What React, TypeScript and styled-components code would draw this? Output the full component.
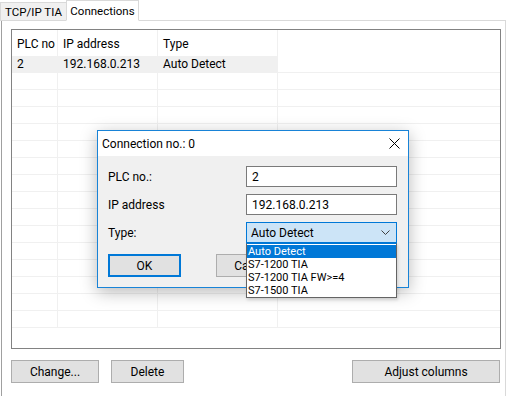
import React from "react";
import styled, { createGlobalStyle } from "styled-components";

const Global = createGlobalStyle`
  html, body { margin: 0; padding: 0; background: #ffffff; }
  body { font-family: Roboto, "Noto Sans", sans-serif; font-size: 12px; color: #000; }
  * { box-sizing: border-box; }
`;

const Window = styled.div`
  position: relative;
  width: 509px;
  height: 396px;
  overflow: hidden;
  background: #ffffff;
`;

const TabStrip = styled.div`
  display: flex;
  align-items: flex-end;
  height: 21px;
  margin-bottom: -1px;
  position: relative;
  z-index: 1;
`;

const Tab = styled.div<{ $active?: boolean }>`
  display: flex;
  align-items: center;
  justify-content: center;
  font-size: 11.5px;
  height: ${(p) => (p.$active ? "21px" : "19px")};
  width: ${(p) => (p.$active ? "73px" : "67px")};
  background: ${(p) => (p.$active ? "#ffffff" : "#f0f0f0")};
  border: 1px solid #d9d9d9;
  border-bottom: ${(p) => (p.$active ? "1px solid #ffffff" : "1px solid #d9d9d9")};
  margin-left: ${(p) => (p.$active ? "-1px" : "0")};
  white-space: nowrap;
  padding-top: ${(p) => (p.$active ? "0" : "1px")};
`;

const Pane = styled.div`
  margin-left: 1px;
  width: 505px;
  height: 376px;
  border: 1px solid #d9d9d9;
  border-left-color: #a0a0a0;
  border-bottom: none;
  padding: 8px 0 0 9px;
  display: flex;
  flex-direction: column;
`;

const ListView = styled.div`
  width: 490px;
  height: 320px;
  border: 1px solid #828282;
  background: #fff;
  display: flex;
  flex-direction: column;
`;

const GridRow = styled.div<{ $header?: boolean }>`
  display: grid;
  grid-template-columns: 46px 100px 120px 1fr;
  height: ${(p) => (p.$header ? "26px" : "17px")};
  border-bottom: ${(p) => (p.$header ? "none" : "1px solid #f0f0f0")};
`;

const Cell = styled.div<{ $selected?: boolean; $last?: boolean; $header?: boolean }>`
  display: flex;
  align-items: center;
  padding-left: 5px;
  padding-top: ${(p) => (p.$header ? "1px" : "0")};
  border-right: ${(p) => (p.$last ? "none" : "1px solid #f0f0f0")};
  background: ${(p) => (p.$selected ? "#f0f0f0" : "transparent")};
  white-space: nowrap;
  overflow: hidden;
`;

const ButtonBar = styled.div`
  display: flex;
  margin-top: 11px;
  gap: 12px;
  width: 489px;
`;

const Button = styled.div<{ $w: number; $push?: boolean; $default?: boolean }>`
  width: ${(p) => p.$w}px;
  height: 23px;
  display: flex;
  align-items: center;
  justify-content: center;
  background: #e1e1e1;
  border: ${(p) => (p.$default ? "2px solid #0078d7" : "1px solid #adadad")};
  margin-left: ${(p) => (p.$push ? "auto" : "0")};
  white-space: nowrap;
`;

const Dialog = styled.div`
  position: absolute;
  left: 97px;
  top: 130px;
  width: 312px;
  height: 158px;
  border: 1px solid #1883d7;
  background: #f0f0f0;
  box-shadow: 0 4px 16px rgba(0, 0, 0, 0.28);
  display: flex;
  flex-direction: column;
  z-index: 5;
`;

const TitleBar = styled.div`
  height: 25px;
  background: #ffffff;
  display: flex;
  align-items: center;
  padding-left: 4px;
  padding-right: 8px;
  justify-content: space-between;
`;

const Body = styled.div`
  position: relative;
  flex: 1;
  padding: 10px 11px 0 10px;
  display: flex;
  flex-direction: column;
  gap: 7px;
`;

const FieldRow = styled.div`
  display: flex;
  align-items: center;
  justify-content: space-between;
  height: 21px;
`;

const Input = styled.div`
  width: 151px;
  height: 21px;
  background: #fff;
  border: 1px solid #7a7a7a;
  display: flex;
  align-items: center;
  padding-left: 5px;
`;

const Combo = styled(Input)`
  background: #cce4f7;
  border-color: #0078d7;
  justify-content: space-between;
  padding-left: 4px;
  padding-right: 6px;
`;

const DialogButtons = styled.div`
  display: flex;
  gap: 35px;
  margin-top: 4px;
`;

const DropList = styled.div`
  position: absolute;
  left: 148px;
  top: 87px;
  width: 151px;
  background: #fff;
  border: 1px solid #646464;
  border-top-color: #0078d7;
  display: flex;
  flex-direction: column;
  padding-top: 1px;
  box-shadow: 1px 2px 3px rgba(0, 0, 0, 0.15);
`;

const DropItem = styled.div<{ $hl?: boolean }>`
  height: 13px;
  line-height: 13px;
  font-size: 11px;
  padding-left: 1px;
  background: ${(p) => (p.$hl ? "#0078d7" : "transparent")};
  color: ${(p) => (p.$hl ? "#fff" : "#000")};
  white-space: nowrap;
  overflow: hidden;
`;

const Chevron = () => (
  <svg width="9" height="5" viewBox="0 0 9 5">
    <path d="M0.5 0.5 L4.5 4.5 L8.5 0.5" fill="none" stroke="#404040" strokeWidth="1" />
  </svg>
);

const CloseIcon = () => (
  <svg width="11" height="11" viewBox="0 0 11 11">
    <path d="M0.5 0.5 L10.5 10.5 M10.5 0.5 L0.5 10.5" stroke="#000" strokeWidth="1" />
  </svg>
);

const rows = Array.from({ length: 15 });

export default function App() {
  return (
    <Window>
      <Global />
      <TabStrip>
        <Tab>TCP/IP TIA</Tab>
        <Tab $active>Connections</Tab>
      </TabStrip>
      <Pane>
        <ListView>
          <GridRow $header>
            <Cell $header>PLC no</Cell>
            <Cell $header>IP address</Cell>
            <Cell $header>Type</Cell>
            <Cell $header $last />
          </GridRow>
          <GridRow>
            <Cell $selected>2</Cell>
            <Cell $selected>192.168.0.213</Cell>
            <Cell $selected>Auto Detect</Cell>
            <Cell $last />
          </GridRow>
          {rows.map((_, i) => (
            <GridRow key={i}>
              <Cell />
              <Cell />
              <Cell />
              <Cell $last />
            </GridRow>
          ))}
        </ListView>
        <ButtonBar>
          <Button $w={88}>Change...</Button>
          <Button $w={73}>Delete</Button>
          <Button $w={148} $push>
            Adjust columns
          </Button>
        </ButtonBar>
      </Pane>
      <Dialog>
        <TitleBar>
          <span>Connection no.: 0</span>
          <CloseIcon />
        </TitleBar>
        <Body>
          <FieldRow>
            <span>PLC no.:</span>
            <Input>2</Input>
          </FieldRow>
          <FieldRow>
            <span>IP address</span>
            <Input>192.168.0.213</Input>
          </FieldRow>
          <FieldRow>
            <span>Type:</span>
            <Combo>
              <span>Auto Detect</span>
              <Chevron />
            </Combo>
          </FieldRow>
          <DialogButtons>
            <Button $w={73} $default>
              OK
            </Button>
            <Button $w={73}>Cancel</Button>
          </DialogButtons>
          <DropList>
            <DropItem $hl>Auto Detect</DropItem>
            <DropItem>S7-1200 TIA</DropItem>
            <DropItem>S7-1200 TIA FW&gt;=4</DropItem>
            <DropItem>S7-1500 TIA</DropItem>
          </DropList>
        </Body>
      </Dialog>
    </Window>
  );
}
